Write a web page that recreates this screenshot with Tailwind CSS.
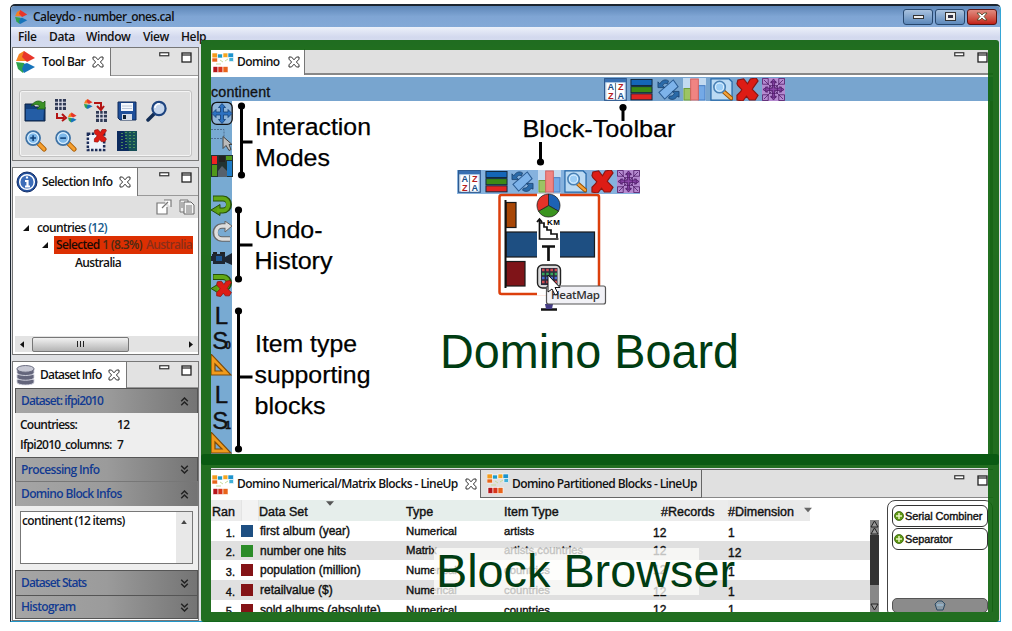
<!DOCTYPE html>
<html lang="en">
<head>
<meta charset="utf-8">
<title>Caleydo - number_ones.cal</title>
<script src="https://cdn.jsdelivr.net/npm/@tailwindcss/browser@4"></script>
</head>
<body class="relative h-[631px] w-[1012px] overflow-hidden bg-white font-['Open_Sans','Noto_Sans',sans-serif] text-[12px] leading-none font-semibold text-[#111]">

<svg class="hidden">
  <symbol id="close" viewBox="0 0 12 12"><path d="M1 1h2.500L6 3.800 8.500 1H11v2.200L8.400 6 11 8.800V11H8.500L6 8.200 3.500 11H1V8.800L3.600 6 1 3.200Z" fill="#fff" stroke="#333" stroke-width="1"/></symbol>
  <symbol id="min" viewBox="0 0 11 5"><rect x=".75" y=".75" width="9" height="3" fill="#fff" stroke="#333" stroke-width="1.200"/></symbol>
  <symbol id="max" viewBox="0 0 11 11"><rect x="1" y="1" width="9" height="9" fill="#fff" stroke="#222" stroke-width="1.300"/><path d="M1 3h9" stroke="#222" stroke-width="1.200"/></symbol>
  <symbol id="cal" viewBox="0 0 20 22"><path d="M0 10 3 3 8 0l3 10Z" fill="#f58220"/><path d="M8 0 19 7l-8 4-5-5Z" fill="#e8352a"/><path d="M0 11l8 1 2 4-3 6-5-4Z" fill="#2fa24d"/><path d="M8 13l3-1 8 4-11 6-2-4Z" fill="#1673ba"/></symbol>
  <symbol id="domino" viewBox="0 0 22 21"><g stroke="#fff" stroke-width=".6"><rect x="0" y="1" width="5.500" height="5" fill="#f39a1c"/><rect x="0" y="6" width="5.500" height="4" fill="#e8641b"/><rect x="5.500" y="2" width="5" height="4" fill="#1d9bc9"/><rect x="11" y="1" width="5" height="4.500" fill="#f5a51f"/><rect x="16" y="1" width="5.500" height="4.500" fill="#1d93cd"/><rect x="17" y="5.500" width="4.500" height="4" fill="#41b0d8"/><rect x="1" y="14.500" width="5" height="6" fill="#b5151b"/><rect x="6" y="14.500" width="5" height="6" fill="#d8351b"/><rect x="11" y="14.500" width="5" height="6" fill="#e8641b"/></g><path d="M8 8l3 2M13 9l3-2M4 12h5" stroke="#c8dc9b"/></symbol>
  <symbol id="mag" viewBox="0 0 24 24"><path d="M14 14l7 7" stroke="#a85a00" stroke-width="5" stroke-linecap="round"/><path d="M15 15l6 6" stroke="#f6a030" stroke-width="3" stroke-linecap="round"/><circle cx="9.500" cy="9.500" r="7.300" fill="#b8dcf8" stroke="#3f72a4" stroke-width="1.800"/><circle cx="9.500" cy="9.500" r="5.500" fill="#7db8ea" stroke="#e8f6ff" stroke-width="1"/></symbol>
  <symbol id="redx" viewBox="0 0 24 24"><path d="M1 6 2 2l6-1 4 5 3-5 6-1 2 3-5 7-1 2 6 6-3 5-6 0-3-4-4 5-6-1 0-5 4-4 1-2-4-4Z" fill="#dd1c15" stroke="#8c1612" stroke-width="1.200"/></symbol>
  <symbol id="az" viewBox="0 0 24 24"><rect x=".7" y=".7" width="22.500" height="22.500" fill="#dceaf6" stroke="#244f86" stroke-width="1.200"/><rect x="1" y="1" width="22" height="3.500" fill="#376fb2"/><rect x="3" y="5.500" width="8" height="17" fill="#fff"/><rect x="13" y="5.500" width="8" height="17" fill="#fff"/><path d="M12 5v18" stroke="#678" stroke-width="1"/><g font-family="Liberation Sans, sans-serif" font-weight="bold" font-size="9.500" text-anchor="middle"><text x="7" y="13" fill="#174e87">A</text><text x="17.500" y="12.500" fill="#b51e1e">Z</text><text x="7" y="22" fill="#b51e1e">Z</text><text x="17.500" y="22" fill="#174e87">A</text></g></symbol>
  <symbol id="layers" viewBox="0 0 24 24"><g stroke="#10253a"><rect x="1" y="1.500" width="22" height="6.300" fill="#1466b8"/><rect x="1" y="9" width="22" height="6.300" fill="#3c8a16"/><rect x="1" y="16.500" width="22" height="6.300" fill="#e02522"/></g></symbol>
  <symbol id="rot" viewBox="0 0 24 24"><path d="M2 15 17 2l5 7L8 22Z" fill="#7db3ea" stroke="#2b5c93" stroke-width="1.100"/><path d="M1 10V4l2 2c2-4 6-5 9-3l-1 3c-3-1-4 0-5 2l2 2Zm22 4v6l-2-1c-2 4-6 4-9 2l1-2c3 0 4-1 5-3l-2-2Z" fill="#2b6aa8" stroke="#173f6b" stroke-width=".8"/></symbol>
  <symbol id="bars" viewBox="0 0 24 24"><rect width="24" height="24" fill="#c3daf0"/><rect x="1" y="11" width="7" height="12" fill="#9cc464" stroke="#6b9b35"/><rect x="16" y="8" width="7" height="15" fill="#74a9e6" stroke="#447bc0"/><rect x="8" y="1" width="8" height="22" fill="#f08482" stroke="#d2605e"/></symbol>
  <symbol id="find" viewBox="0 0 24 24"><path d="M1 1h19l3 3v19H1Z" fill="#bbdaf3" stroke="#2668a8" stroke-width="1.300"/><path d="M14 14l8 7" stroke="#9a5200" stroke-width="4.500" stroke-linecap="round"/><path d="M15 15l7 6" stroke="#f5a33a" stroke-width="2.500" stroke-linecap="round"/><circle cx="10" cy="9.500" r="6" fill="#9ccdf5" stroke="#4a81b4" stroke-width="1.600"/><circle cx="10" cy="9.500" r="4.200" fill="none" stroke="#e4f4ff"/></symbol>
  <symbol id="purple" viewBox="0 0 24 24"><rect width="24" height="24" fill="#b58ad0"/><g fill="#8a45a8" stroke="#4a1763" stroke-width=".8"><path d="M12 1l3 4h-2v5.500h5.500V9l4.500 3-4.500 3v-2h-5.500V19h2l-3 4-3-4h2v-6H5.500v2L1 12l4.500-3v1.500H11V5H9Z"/><path fill="none" d="M.5.5h6v6h-6Zm17 0h6v6h-6Zm-17 17h6v6h-6Zm17 0h6v6h-6ZM2 2l8 8M22 2l-8 8M2 22l8-8M22 22l-8-8M4 9v6M20 9v6M9 4h6M9 20h6M8 8h8v8H8Z"/></g></symbol>
  <symbol id="tri" viewBox="0 0 21 22"><path d="M0 0 20 21H0Z" fill="#f19b1c" stroke="#7b4b0a" stroke-width="1.200"/><path d="M4 10l7 7H4Z" fill="#78aad2" stroke="#7b4b0a" stroke-width="1.200"/></symbol>
  <symbol id="up" viewBox="0 0 9 9"><path d="M1.200 4.200 4.500 1l3.300 3.200M1.200 8.200 4.500 5l3.300 3.200" fill="none" stroke="#222" stroke-width="1.500"/></symbol>
  <symbol id="down" viewBox="0 0 9 9"><path d="M1.200.8 4.500 4 7.800.8M1.200 4.800 4.500 8l3.300-3.200" fill="none" stroke="#222" stroke-width="1.500"/></symbol>
  <symbol id="undo" viewBox="0 0 22 22"><path d="M2 4h10c8 0 8 12 0 12H8" fill="none" stroke="#26500b" stroke-width="6"/><path d="M9 10v11L0 15.500Z" fill="#5a9e12" stroke="#26500b"/><path d="M2.500 4H12c7 0 7 12 0 12H6" fill="none" stroke="#62a816" stroke-width="4"/></symbol>
  <symbol id="plus" viewBox="0 0 10 10"><circle cx="5" cy="5" r="4.500" fill="#5f9813" stroke="#35610b" stroke-width=".8"/><path d="M5 2v6M2 5h6" stroke="#e9f6c4" stroke-width="1.500"/></symbol>
  <symbol id="grid" viewBox="0 0 10 10"><path d="M0 0h10v10H0Z" fill="#303a55"/><path d="M0 3h10M0 6.500h10M3.300 0v10M6.600 0v10" stroke="#e6e6f0" stroke-width="1"/></symbol>
</svg>

<!-- application window -->
<div class="ml-[10px] flex h-[622px] w-[991px] flex-col pt-[4px]">
 <div class="flex h-[618px] flex-col rounded-t-[5px] border border-t-2 border-[#1b2530] border-r-[#35a6d6] border-b-[#2096c8]">
  <header class="flex h-[21px] shrink-0 items-center rounded-t-[4px] bg-linear-to-b from-[#5e87b8] via-[#7fa5d4] to-[#84a9d7] pl-[4px]">
    <svg class="h-[14px] w-[13px]"><use href="#cal"/></svg>
    <h1 class="ml-[5px] tracking-[-0.55px]">Caleydo - number_ones.cal</h1>
    <div class="mr-[3px] ml-auto flex gap-[2px]">
      <div class="flex h-[16px] w-[30px] items-center justify-center rounded-[3px] border border-[#27476d] bg-linear-to-b from-[#a9c2df] to-[#5d89bb]"><div class="h-[4px] w-[11px] border border-[#333] bg-[#eee]"></div></div>
      <div class="flex h-[16px] w-[30px] items-center justify-center rounded-[3px] border border-[#27476d] bg-linear-to-b from-[#a9c2df] to-[#5d89bb]"><div class="flex h-[9px] w-[11px] items-center justify-center border border-[#333] bg-[#eee]"><div class="h-[3px] w-[5px] bg-[#334]"></div></div></div>
      <div class="flex h-[16px] w-[30px] items-center justify-center rounded-[3px] border border-[#5a1310] bg-linear-to-b from-[#e08a80] to-[#c21c14]"><svg viewBox="0 0 12 9" class="h-[9px] w-[12px]"><path d="M1 1h3l2 2 2-2h3L8 4.500 11 8H8L6 6 4 8H1l3-3.500Z" fill="#fff" stroke="#442" stroke-width=".8"/></svg></div>
    </div>
  </header>
  <nav class="flex h-[20px] shrink-0 items-center bg-linear-to-b from-[#edf1fa] via-[#d3d9ee] to-[#d5dcef] pl-[7px] tracking-[-0.4px]">
    <span class="w-[31px]">File</span><span class="w-[37px]">Data</span><span class="w-[57px]">Window</span><span class="w-[38px]">View</span><span>Help</span>
  </nav>

  <div class="flex h-[574px] bg-[#dfe0e3]">
   <!-- left column of views -->
   <aside class="flex w-[189px] shrink-0 flex-col gap-[6px] pr-px pl-px">
    <section class="flex h-[114px] flex-col border border-[#777] bg-[#e2e2e2]">
      <div class="flex h-[28px] shrink-0">
        <div class="flex w-[98px] items-center border-r border-[#777] bg-white pl-[3px]"><svg class="h-[22px] w-[20px]"><use href="#cal"/></svg><span class="ml-[6px] tracking-[-0.6px]">Tool Bar</span><svg class="ml-[7px] h-[12px] w-[12px]"><use href="#close"/></svg></div>
        <div class="flex flex-1 gap-[11px] border-b border-[#999] pt-[4px] pl-[48px]"><svg class="h-[5px] w-[11px]"><use href="#min"/></svg><svg class="h-[11px] w-[11px]"><use href="#max"/></svg></div>
      </div>
      <div class="flex flex-1 flex-col border-t-2 border-white px-[6px] pt-[12px] pb-[3px]">
        <div class="grid flex-1 grid-cols-[repeat(5,30.5px)] content-start items-center justify-items-center gap-y-[6px] rounded-[3px] border border-[#c2c2c2] bg-[#dedede] pt-[8px] shadow-[inset_0_0_0_1px_#f4f4f4]">
          <svg viewBox="0 0 24 24" class="h-[24px] w-[24px]"><path d="M2 5h8l2 3h10v14H2Z" fill="#123f7c" stroke="#0a2245"/><path d="M3 10h18l-1 11H3Z" fill="#245da5"/><path d="M8 7c4-6 9-6 12-3l2-2v8h-8l3-3c-3-2-5-2-9 0Z" fill="#3b9226" stroke="#1d5a14" stroke-width=".8"/></svg>
          <svg viewBox="0 0 24 24" class="h-[24px] w-[24px]"><use href="#grid" x="1" y="0" width="11" height="11"/><path d="M3 14v5h7M8 15l4 4-4 3" fill="none" stroke="#b31414" stroke-width="2"/><use href="#cal" x="14" y="13" width="9" height="11"/></svg>
          <svg viewBox="0 0 24 24" class="h-[24px] w-[24px]"><use href="#cal" x="0" y="0" width="9" height="10"/><path d="M10 4h7v6M13 7l4 4 3-4" fill="none" stroke="#b31414" stroke-width="2"/><use href="#grid" x="12" y="12" width="11" height="11"/></svg>
          <svg viewBox="0 0 20 20" class="h-[20px] w-[20px]"><path d="M1 1h18v18H3l-2-2Z" fill="#1f4f9a" stroke="#102a58"/><rect x="4" y="2" width="12" height="8" fill="#f3f7fd"/><path d="M5 5h10M5 7.500h10" stroke="#b9c6d8"/><rect x="5" y="13" width="10" height="6" fill="#d5dce8"/><rect x="6" y="14" width="3" height="4" fill="#123"/></svg>
          <svg viewBox="0 0 22 22" class="h-[22px] w-[22px]"><path d="M9 13l-7 7" stroke="#122d55" stroke-width="3.500" stroke-linecap="round"/><circle cx="13" cy="8.500" r="6.600" fill="#c6d6ec" stroke="#1d4480" stroke-width="2.200"/><path d="M9 8a4 4 0 0 1 5-4" stroke="#fff" stroke-width="1.500" fill="none"/></svg>
          <svg viewBox="0 0 24 24" class="h-[23px] w-[23px]"><use href="#mag"/><path d="M9.500 6.500v6M6.500 9.500h6" stroke="#0f4078" stroke-width="1.600"/></svg>
          <svg viewBox="0 0 24 24" class="h-[23px] w-[23px]"><use href="#mag"/><path d="M6.500 9.500h6" stroke="#0f4078" stroke-width="1.600"/></svg>
          <svg viewBox="0 0 24 24" class="h-[23px] w-[23px]"><rect x="3" y="5" width="17" height="17" fill="#eef2fa" stroke="#1c2d58" stroke-width="2.600" stroke-dasharray="2.600 1.500"/><use href="#redx" x="9" y="0" width="14" height="14"/></svg>
          <svg viewBox="0 0 20 20" class="h-[20px] w-[20px]"><rect width="20" height="20" fill="#0c2b5e"/><path d="M7 0h13v20H12Z" fill="#164f57"/><path d="M5 2v16M9 1v18M13 1v18M17 1v18" stroke="#5faa5a" stroke-width="1.500" stroke-dasharray="1 2"/></svg>
        </div>
      </div>
    </section>

    <section class="flex h-[188px] flex-col border border-[#777] bg-white">
      <div class="flex h-[28px] shrink-0">
        <div class="flex w-[125px] items-center border-r border-[#777] bg-white pl-[3px]"><svg viewBox="0 0 22 22" class="h-[22px] w-[22px] shrink-0"><circle cx="11" cy="11" r="10" fill="#214f9c" stroke="#142f68"/><circle cx="11" cy="11" r="7.300" fill="#3c6db8" stroke="#fff" stroke-width="1.500"/><path d="M11 5.500v2M9 10h2.500v5M9 15.500h5" stroke="#fff" stroke-width="2.200" fill="none"/></svg><span class="ml-[4px] whitespace-nowrap tracking-[-0.6px]">Selection Info</span><svg class="ml-[7px] h-[12px] w-[12px] shrink-0"><use href="#close"/></svg></div>
        <div class="flex flex-1 gap-[11px] border-b border-[#999] bg-[#e2e2e2] pt-[4px] pl-[21px]"><svg class="h-[5px] w-[11px]"><use href="#min"/></svg><svg class="h-[11px] w-[11px]"><use href="#max"/></svg></div>
      </div>
      <div class="ml-[2px] flex h-[22px] items-center justify-end gap-[7px] bg-[#e0e0e0] pr-[3px]">
        <svg viewBox="0 0 16 16" class="h-[16px] w-[16px]"><path d="M9 4H1v11h10V8M6 9l6-6M8 1h7v7" fill="#fff" stroke="#777" stroke-width="1.200"/></svg>
        <svg viewBox="0 0 16 16" class="h-[16px] w-[16px]"><path d="M1 1h8v12H1Z" fill="#eee" stroke="#777"/><path d="M5 3h7l3 3v9H5Z" fill="#f4f4f4" stroke="#666"/><path d="M7 7h6M7 9h6M7 11h6M7 13h6M2 4h2M2 6h2M2 8h2" stroke="#777"/></svg>
      </div>
      <div class="flex flex-1 flex-col pt-px pl-[10px] tracking-[-0.65px]">
        <div class="flex h-[17px] items-center"><svg viewBox="0 0 7 7" class="h-[6px] w-[6px]"><path d="M7 0v7H0Z" fill="#111"/></svg><span class="ml-[8px]">countries <span class="text-[#155a8c]">(12)</span></span></div>
        <div class="flex h-[18px] items-center pl-[19px]"><svg viewBox="0 0 7 7" class="h-[6px] w-[6px]"><path d="M7 0v7H0Z" fill="#111"/></svg><span class="ml-[6px] flex h-[18px] w-[139px] items-center overflow-hidden bg-[#dc2f02] pl-[2px] whitespace-nowrap"><span class="text-[#1c0a04]">Selected <span class="text-[#4b2a14]">1 (8.3%)</span></span><span class="ml-[4px] text-[#8a2e19]">Australia</span></span></div>
        <div class="flex h-[18px] items-center pl-[52px]">Australia</div>
      </div>
      <div class="mb-[2px] ml-[2px] flex h-[16px] items-center bg-[#e3e3e3] px-[5px]">
        <svg viewBox="0 0 5 8" class="h-[7px] w-[4px]"><path d="M5 0v8L0 4Z" fill="#111"/></svg>
        <div class="ml-[8px] flex h-[15px] w-[97px] items-center justify-center gap-[2px] rounded-[2px] border border-[#777] bg-linear-to-b from-[#f2f2f2] to-[#b4b4b4]"><i class="h-[6px] w-px bg-[#222]"></i><i class="h-[6px] w-px bg-[#222]"></i><i class="h-[6px] w-px bg-[#222]"></i></div>
        <svg viewBox="0 0 5 8" class="ml-auto h-[7px] w-[4px]"><path d="M0 0v8l5-4Z" fill="#111"/></svg>
      </div>
    </section>

    <section class="flex h-[260px] flex-col border border-[#777] bg-white">
      <div class="flex h-[26px] shrink-0">
        <div class="flex w-[114px] items-center border-r border-[#777] bg-white pl-[3px]"><svg viewBox="0 0 20 22" class="h-[21px] w-[19px] shrink-0"><g fill="#63657b" stroke="#dfe0ea" stroke-width=".9"><path d="M1 15v3c0 4 18 4 18 0v-3Z"/><path d="M1 10v3c0 4 18 4 18 0v-3Z"/><path d="M1 4v4c0 4 18 4 18 0V4Z"/></g><ellipse cx="10" cy="4" rx="9" ry="3.500" fill="#c7c8d4" stroke="#66687c"/></svg><span class="ml-[5px] whitespace-nowrap tracking-[-0.8px]">Dataset Info</span><svg class="ml-[7px] h-[12px] w-[12px] shrink-0"><use href="#close"/></svg></div>
        <div class="flex flex-1 gap-[11px] border-b border-[#999] bg-[#e2e2e2] pt-[3px] pl-[32px]"><svg class="h-[5px] w-[11px]"><use href="#min"/></svg><svg class="h-[11px] w-[11px]"><use href="#max"/></svg></div>
      </div>
      <div class="ml-[2px] flex flex-col bg-[#eee] tracking-[-0.65px]">
        <div class="flex h-[25px] items-center border border-b-0 border-[#555] bg-linear-to-r from-[#a5a5a5] via-[#9b9b9b] to-[#747474] pr-[8px] pl-[5px] tracking-[-0.9px] text-[#123a91]">Dataset: ifpi2010<svg class="ml-auto h-[9px] w-[9px]"><use href="#up"/></svg></div>
        <div class="grid h-[44px] grid-cols-[97px_1fr] content-center gap-y-[8px] pl-[5px]"><span class="tracking-[-0.75px]">Countriess:</span><span>12</span><span class="whitespace-nowrap tracking-[-0.72px]">Ifpi2010_columns:</span><span>7</span></div>
        <div class="flex h-[24px] items-center border border-b-0 border-[#555] bg-linear-to-r from-[#a5a5a5] via-[#9b9b9b] to-[#747474] pr-[8px] pl-[5px] text-[#123a91]">Processing Info<svg class="ml-auto h-[9px] w-[9px]"><use href="#down"/></svg></div>
        <div class="flex h-[25px] items-center border border-b-0 border-[#777] bg-linear-to-r from-[#a5a5a5] via-[#9b9b9b] to-[#747474] pr-[8px] pl-[5px] text-[#123a91]">Domino Block Infos<svg class="ml-auto h-[9px] w-[9px]"><use href="#up"/></svg></div>
        <div class="px-[5px] pt-[5px] pb-[6px]"><div class="flex h-[53px] justify-between border border-[#777] bg-white"><span class="pt-[3px] pl-[1px]">continent (12 items)</span><div class="w-[16px] bg-[#e8e8e8]"><svg viewBox="0 0 7 5" class="mx-auto mt-[8px] h-[4px] w-[6px]"><path d="M0 5 3.500 0 7 5Z" fill="#444"/></svg></div></div></div>
        <div class="flex h-[25px] items-center border border-b-0 border-[#555] bg-linear-to-r from-[#a5a5a5] via-[#9b9b9b] to-[#747474] pr-[8px] pl-[5px] tracking-[-0.9px] text-[#123a91]">Dataset Stats<svg class="ml-auto h-[9px] w-[9px]"><use href="#down"/></svg></div>
        <div class="flex h-[24px] items-center border border-[#555] bg-linear-to-r from-[#a5a5a5] via-[#9b9b9b] to-[#747474] pr-[8px] pl-[5px] text-[#123a91]">Histogram<svg class="ml-auto h-[9px] w-[9px]"><use href="#down"/></svg></div>
      </div>
    </section>
   </aside>

   <!-- right column: board above, browser below -->
   <main class="flex flex-1 flex-col pt-[2px] pr-[11px] pl-[11px]">
    <section class="flex h-[405px] shrink-0 flex-col bg-white">
      <div class="flex h-[26px] shrink-0">
        <div class="flex w-[94px] items-center border-r border-[#777] bg-white pl-px"><svg class="h-[21px] w-[22px] shrink-0"><use href="#domino"/></svg><span class="ml-[3px] tracking-[-0.55px]">Domino</span><svg class="ml-[8px] h-[12px] w-[12px]"><use href="#close"/></svg></div>
        <div class="flex flex-1 justify-end gap-[12px] border-b-2 border-[#888] bg-[#e0e0e0] pt-[3px] pr-[5px]"><svg class="h-[5px] w-[11px]"><use href="#min"/></svg><svg class="h-[11px] w-[11px]"><use href="#max"/></svg></div>
      </div>
      <div class="mt-[2px] flex h-[24px] shrink-0 items-end bg-[#78a5cf]">
        <span class="w-[393px] pb-[2px] font-['Liberation_Sans',sans-serif] text-[14.300px] font-normal tracking-[0.15px] [-webkit-text-stroke:0.3px]">continent</span>
        <div class="flex gap-[3.400px]"><svg class="h-[23px] w-[23px]"><use href="#az"/></svg><svg class="h-[23px] w-[23px]"><use href="#layers"/></svg><svg class="h-[23px] w-[23px]"><use href="#rot"/></svg><svg class="h-[23px] w-[23px]"><use href="#bars"/></svg><svg class="h-[23px] w-[23px]"><use href="#find"/></svg><svg class="h-[23px] w-[23px]"><use href="#redx"/></svg><svg class="h-[23px] w-[23px]"><use href="#purple"/></svg></div>
      </div>
      <div class="flex h-[353px] justify-between">
        <div class="flex w-[21px] flex-col items-center bg-[#78aad2] font-['Liberation_Sans',sans-serif] text-[24px] font-normal [-webkit-text-stroke:0.4px]">
          <svg viewBox="0 0 22 24" class="h-[25px] w-[22px] shrink-0"><rect x=".8" y=".8" width="20.400" height="22" rx="5" fill="#8fb4d8" stroke="#111" stroke-width="1.300"/><path d="M11 2l3.500 4h-2v4.500H17V8l4 4-4 4v-2.500h-4.500V18h2L11 22l-3.500-4h2v-4.500H5V16l-4-4 4-4v2.500h4.500V6h-2Z" fill="#2d72c2" stroke="#123f75" stroke-width=".8"/></svg>
          <svg viewBox="0 0 22 25" class="h-[26px] w-[22px] shrink-0"><path d="M0 3h13v9H0" fill="none" stroke="#4d6e91" stroke-dasharray="2 1"/><path d="M12 10v12l3-3 3 5 2-1-2-5h3Z" fill="#bbb" stroke="#444"/></svg>
          <svg viewBox="0 0 22 22" class="mt-[3px] h-[22px] w-[22px] shrink-0"><rect width="22" height="22" fill="#233"/><rect x="1" y="1" width="5" height="8" fill="#e22"/><rect x="1" y="10" width="5" height="11" fill="#51981b"/><rect x="8" y="1" width="6" height="6" fill="#222"/><rect x="15" y="1" width="6" height="4" fill="#51981b"/><rect x="16" y="6" width="5" height="15" fill="#1f7cc7"/><path d="M7 16l4-5 5 5v6H7Z" fill="#56616d"/></svg>
          <svg class="mt-[17px] h-[23px] w-[22px] shrink-0"><use href="#undo"/></svg>
          <svg viewBox="0 0 22 22" class="mt-[4px] h-[22px] w-[22px] shrink-0"><path d="M19 18h-8c-9 0-9-13 0-13h4" fill="none" stroke="#666" stroke-width="5.500"/><path d="M14 0v11l7-6Z" fill="#ddd" stroke="#666"/><path d="M19 18h-8c-8 0-8-13 0-13h5" fill="none" stroke="#ddd" stroke-width="3.600"/></svg>
          <svg viewBox="0 0 22 16" class="mt-[8px] h-[16px] w-[22px] shrink-0"><path d="M1 3h13v3l7-4v12l-7-3v2H2v-3H0V5h1Z" fill="#1e2733"/><rect x="5" y="5" width="6" height="5" fill="#1c5591"/><path d="M2 2h4m3 0h5" stroke="#222" stroke-width="2"/></svg>
          <svg viewBox="0 0 22 24" class="mt-[6px] h-[24px] w-[22px] shrink-0"><use href="#undo" width="22" height="22"/><use href="#redx" x="5" y="7" width="16" height="17"/></svg>
          <span class="mt-[7px] h-[26px]">L</span>
          <span class="h-[26px] whitespace-nowrap">S<span class="-ml-[3px] text-[10px] font-bold">0</span></span>
          <svg class="-mt-px h-[22px] w-[21px] shrink-0"><use href="#tri"/></svg>
          <span class="mt-[7px] h-[27px]">L</span>
          <span class="h-[26px] whitespace-nowrap">S<span class="-ml-[3px] text-[10px] font-bold">1</span></span>
          <svg class="-mt-[2px] h-[22px] w-[21px] shrink-0"><use href="#tri"/></svg>
        </div>
        <div class="w-[3px] bg-[#777]"></div>
      </div>
    </section>

    <section class="mt-[15px] flex h-[143px] shrink-0 flex-col overflow-hidden border-t border-[#666] bg-white">
      <div class="flex h-[28px] shrink-0">
        <div class="flex w-[270px] items-center border-r border-[#666] bg-white pl-px"><svg class="h-[21px] w-[22px] shrink-0"><use href="#domino"/></svg><span class="ml-[3px] whitespace-nowrap tracking-[-0.57px]">Domino Numerical/Matrix Blocks - LineUp</span><svg class="ml-[7px] h-[12px] w-[12px] shrink-0"><use href="#close"/></svg></div>
        <div class="flex w-[221px] items-center border-r border-b border-[#666] bg-[#e0e0e0] pl-[6px]"><svg class="h-[21px] w-[22px] shrink-0"><use href="#domino"/></svg><span class="ml-[3px] whitespace-nowrap tracking-[-0.6px]">Domino Partitioned Blocks - LineUp</span></div>
        <div class="flex flex-1 justify-end gap-[12px] border-b border-[#888] bg-[#e0e0e0] pt-[5px] pr-[5px]"><svg class="h-[5px] w-[11px]"><use href="#min"/></svg><svg class="h-[11px] w-[11px]"><use href="#max"/></svg></div>
      </div>
      <div class="flex flex-1 font-['Liberation_Sans',sans-serif] text-[12px] font-normal [-webkit-text-stroke:0.4px]">
        <div class="w-[659px]">
          <div class="mt-[2px] grid h-[21px] grid-cols-[30px_18px_147px_98px_157px_67px_82px_1fr] items-center text-[12.500px] [&>*]:flex [&>*]:h-full [&>*]:items-center [&>*]:pt-[3px]">
            <span class="bg-[#ececec] pl-px">Ran</span><span class="border-x border-[#e4e4e4] bg-[#f3f3f3]"></span><span class="bg-[#e6eeeb]">Data Set</span><span class="bg-[#e6eeeb]">Type</span><span class="bg-[#e6eeeb]">Item Type</span><span class="bg-[#ececec]">#Records</span><span class="bg-[#e9e9e9]">#Dimension</span><svg viewBox="0 0 9 5" class="-mt-[4px] w-[8px] -translate-x-[6px]"><path d="M0 0h9L4.500 5Z" fill="#666"/></svg>
          </div>
          <div class="grid h-[20px] grid-cols-[24px_25px_146px_98px_149px_75px_1fr] items-center"><span class="pt-1 text-right text-[11px]">1.</span><i class="ml-[6px] h-[12px] w-[12px] bg-[#1e4f82]"></i><span>first album (year)</span><span class="pt-px text-[11.300px]">Numerical</span><span class="pt-px text-[11.300px]">artists</span><span class="pt-1">12</span><span class="pt-1">1</span></div>
          <div class="grid h-[19px] grid-cols-[24px_25px_146px_98px_149px_75px_1fr] items-center bg-[#e0e0e0]"><span class="pt-1 text-right text-[11px]">2.</span><i class="ml-[6px] h-[12px] w-[12px] bg-[#2c8c29]"></i><span>number one hits</span><span class="pt-px text-[11.300px]">Matrix</span><span class="text-[11.300px]">artists,countries</span><span>12</span><span class="pt-1">12</span></div>
          <div class="grid h-[20px] grid-cols-[24px_25px_146px_98px_149px_75px_1fr] items-center"><span class="pt-1 text-right text-[11px]">3.</span><i class="ml-[6px] h-[12px] w-[12px] bg-[#841316]"></i><span>population (million)</span><span class="pt-px text-[11.300px]">Numerical</span><span class="pt-px text-[11.300px]">countries</span><span>12</span><span class="pt-1">1</span></div>
          <div class="grid h-[20px] grid-cols-[24px_25px_146px_98px_149px_75px_1fr] items-center bg-[#e0e0e0]"><span class="pt-1 text-right text-[11px]">4.</span><i class="ml-[6px] h-[12px] w-[12px] bg-[#841316]"></i><span>retailvalue ($)</span><span class="pt-px text-[11.300px]">Numerical</span><span class="pt-[2px] text-[11.300px]">countries</span><span class="pt-1">12</span><span class="pt-1">1</span></div>
          <div class="grid h-[20px] grid-cols-[24px_25px_146px_98px_149px_75px_1fr] items-center"><span class="pt-[2px] text-right text-[11px]">5.</span><i class="ml-[6px] h-[12px] w-[12px] bg-[#841316]"></i><span class="whitespace-nowrap">sold albums (absolute)</span><span class="pt-px text-[11.300px]">Numerical</span><span class="pt-px text-[11.300px]">countries</span><span>12</span><span>1</span></div>
        </div>
        <svg viewBox="0 0 9 97" class="mt-[22px] h-[97px] w-[9px]"><rect width="9" height="97" fill="#888"/><rect y="15" width="9" height="50" fill="#333"/><path d="M1 7l3.500-6L8 7ZM1 14l3.500-6L8 14ZM1 84l3.500 6L8 84Z" fill="#999" stroke="#222"/></svg>
        <div class="mt-[2px] ml-[8px] flex h-[118px] w-[106px] shrink-0 flex-col rounded-[8px] border border-[#444] px-[4px] pt-[4px]">
          <div class="flex h-[22px] shrink-0 items-center gap-px rounded-[6px] border border-[#333] pl-px text-[10.900px] tracking-[-0.05px] whitespace-nowrap"><svg class="h-[10px] w-[10px]"><use href="#plus"/></svg>Serial Combiner</div>
          <div class="mt-px flex h-[22px] shrink-0 items-center gap-px rounded-[6px] border border-[#333] pl-px text-[10.900px] tracking-[-0.05px]"><svg class="h-[10px] w-[10px]"><use href="#plus"/></svg>Separator</div>
          <div class="mt-auto mb-[4px] flex h-[15px] items-center justify-center rounded-[5px] border border-[#555] bg-[#8b8b8b]"><svg viewBox="0 0 12 11" class="h-[11px] w-[12px]"><path d="M1 4l3-3h4l3 3-2 6H3Z" fill="#8b9aa5" stroke="#2b4a63"/><path d="M3 5h6" stroke="#9cc5e4"/></svg></div>
        </div>
      </div>
    </section>
   </main>
  </div>
 </div>
</div>

<!-- block placed on the board canvas -->
<div class="absolute top-[170px] left-[457px] flex h-[24px] w-[183px] gap-[3.500px] bg-[#86b2de] pl-px"><svg class="h-[23px] w-[23px]"><use href="#az"/></svg><svg class="h-[23px] w-[23px]"><use href="#layers"/></svg><svg class="h-[23px] w-[23px]"><use href="#rot"/></svg><svg class="h-[23px] w-[23px]"><use href="#bars"/></svg><svg class="h-[23px] w-[23px]"><use href="#find"/></svg><svg class="h-[23px] w-[23px]"><use href="#redx"/></svg><svg class="h-[23px] w-[23px]"><use href="#purple"/></svg></div>
<svg viewBox="490 190 120 125" class="absolute top-[190px] left-[490px] h-[125px] w-[120px]">
  <rect x="499.500" y="195" width="99.500" height="99" rx="2" fill="none" stroke="#dc3f0c" stroke-width="2.500"/>
  <g stroke="#1a1a1a" stroke-width="1.200"><rect x="506" y="202.500" width="10" height="25" fill="#a84707"/><rect x="506" y="232" width="88.500" height="25" fill="#1e4f82"/><rect x="506" y="261.500" width="19" height="24.500" fill="#7f1418"/></g>
  <path d="M505.500 200v88" stroke="#111" stroke-width="2"/>
  <rect x="537" y="193.500" width="23" height="102" fill="#fff"/>
  <g stroke="#222" stroke-width=".8"><path d="M548.500 205.500V194a11.500 11.500 0 0 1 10 17.200Z" fill="#1d62b4"/><path d="M548.500 205.500l10 5.700a11.500 11.500 0 0 1-20 0Z" fill="#3a941f"/><path d="M548.500 205.500l-10 5.700A11.500 11.500 0 0 1 548.500 194Z" fill="#e43228"/></g>
  <path d="M539.500 220v19h19M537 222l2.500-3 2.500 3M540 223h4v4h3v3h4v4h6v4" fill="none" stroke="#111" stroke-width="1.700"/>
  <text x="547" y="225" font-family="Liberation Sans, sans-serif" font-size="8" font-weight="bold" textLength="13">KM</text>
  <path d="M542 246.500h13M548.500 246v15" stroke="#111" stroke-width="2.700"/>
  <rect x="537.500" y="265" width="23" height="23" rx="5" fill="#d8d8d8" stroke="#222" stroke-width="1.400"/><rect x="541" y="268" width="16.500" height="17" fill="#2b2b3d"/>
  <g stroke-width="2.600" stroke-dasharray="2.600 1.600"><path d="M542 270h15M542 282h15" stroke="#cf4a50"/><path d="M542 274h15" stroke="#38a658"/><path d="M542 278h15" stroke="#4b6cd0"/></g>
  <path d="M541 309.500h16" stroke="#111" stroke-width="2.500"/><path d="M545 304h8l-1 5h-6Z" fill="#443c86"/>
  <rect x="546.500" y="286" width="59" height="18" rx="2" fill="#f1f1f6" stroke="#555" stroke-width="1.200"/>
  <text x="551" y="299" font-family="Open Sans, sans-serif" font-size="11.500" fill="#333" textLength="49">HeatMap</text>
  <path d="M548 275v17l4-3 3 6 3-1.500-3-6h5Z" fill="#fff" stroke="#111" stroke-width="1"/>
</svg>

<!-- highlighted regions -->
<div class="absolute top-[40px] left-[201px] h-[419px] w-[798px] rounded-t-[3px] border-10 border-r-[11px] border-b-0 border-[#11640f]/92"></div>
<div class="absolute top-[459px] left-[201px] h-[163px] w-[798px] rounded-b-[3px] border-10 border-t-9 border-r-[11px] border-[#11640f]/92"></div>
<div class="absolute top-[454px] left-[201px] h-[11px] w-[798px] rounded-[3px] bg-[#0a5a12]"></div>
<div class="absolute top-[548px] left-[434px] h-[47px] w-[265px] bg-[#fdfdfb]/75"></div>

<!-- callout brackets and labels -->
<svg viewBox="0 0 1012 631" class="absolute top-0 left-0 h-[631px] w-[1012px] font-normal" font-family="Liberation Sans, Arial, sans-serif" font-size="24.500" fill="#000">
  <g stroke="#000" stroke-width="3"><path d="M241.500 106v69M241.500 142h11M238.500 210v69M238.500 245h14M238.500 311v138M238.500 377h14M623 108v13M540.500 142v20" fill="none"/></g>
  <g><circle cx="241.500" cy="106" r="3.600"/><circle cx="241.500" cy="175" r="3.600"/><circle cx="238.500" cy="210" r="3.600"/><circle cx="238.500" cy="279" r="3.600"/><circle cx="238.500" cy="311" r="3.600"/><circle cx="238.500" cy="449" r="3.600"/><circle cx="623" cy="107.500" r="3.600"/><circle cx="540.500" cy="162" r="3.600"/></g>
  <g lengthAdjust="spacingAndGlyphs" stroke="#000" stroke-width=".25">
  <text x="255" y="135" textLength="116" lengthAdjust="spacingAndGlyphs">Interaction</text><text x="255" y="166" textLength="75" lengthAdjust="spacingAndGlyphs">Modes</text>
  <text x="254.500" y="238" textLength="68" lengthAdjust="spacingAndGlyphs">Undo-</text><text x="254.500" y="269" textLength="78" lengthAdjust="spacingAndGlyphs">History</text>
  <text x="255" y="352" textLength="102" lengthAdjust="spacingAndGlyphs">Item type</text><text x="254.500" y="383" textLength="116" lengthAdjust="spacingAndGlyphs">supporting</text><text x="254.500" y="414" textLength="71" lengthAdjust="spacingAndGlyphs">blocks</text>
  <text x="522.500" y="136.500" textLength="153" lengthAdjust="spacingAndGlyphs">Block-Toolbar</text>
  </g>
  <text x="440" y="368" font-size="47.500" textLength="299" lengthAdjust="spacingAndGlyphs" fill="#003c12">Domino Board</text>
  <text x="436" y="587" font-size="46.500" textLength="299" lengthAdjust="spacingAndGlyphs" fill="#003c12">Block Browser</text>
</svg>
<svg viewBox="0 0 9 5" class="absolute top-[501px] left-[326px] h-[5px] w-[8px]"><path d="M0 0h9L4.500 5Z" fill="#555"/></svg>
</body>
</html>
